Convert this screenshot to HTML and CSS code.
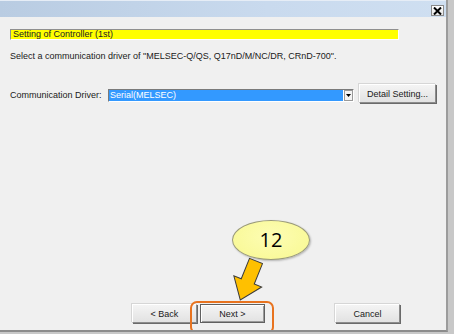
FILE: index.html
```html
<!DOCTYPE html>
<html lang="en">
<head>
    <meta charset="UTF-8">
    <title>Setting of Controller</title>
    <link rel="stylesheet" href="styles.css">
</head>
<body>

<div class="dialog">
    <!-- Title bar -->
    <div class="titlebar">
        <span class="close-btn">
            <svg width="9" height="8" viewBox="0 0 9 8"><path d="M1 0.5 L8 7.5 M8 0.5 L1 7.5" stroke="#000" stroke-width="2"/></svg>
        </span>
    </div>

    <!-- Page content -->
    <div class="content">
        <div class="heading">Setting of Controller (1st)</div>
        <p class="desc">Select a communication driver of "MELSEC-Q/QS, Q17nD/M/NC/DR, CRnD-700".</p>

        <div class="driver-row">
            <span class="label">Communication Driver:</span>
            <div class="combo">
                <span class="combo-value">Serial(MELSEC)</span>
                <span class="combo-arrow">
                    <svg width="5" height="3" viewBox="0 0 5 3"><path d="M0 0 H5 L2.5 3 Z" fill="#000"/></svg>
                </span>
            </div>
            <button class="btn detail-btn">Detail Setting...</button>
        </div>
    </div>

    <!-- Wizard buttons -->
    <div class="footer">
        <button class="btn">&lt; Back</button>
        <button class="btn default-btn">Next &gt;</button>
        <button class="btn cancel-btn">Cancel</button>
    </div>

    <!-- Callout overlay -->
    <svg class="callout-arrow" width="50" height="60" viewBox="0 0 50 60">
        <g transform="translate(28 6) rotate(22)">
            <path d="M-7 0 H7 V22 H15 L0 42 L-15 22 H-7 Z" fill="#ffc000" stroke="#3a3a3a" stroke-width="1" stroke-linejoin="miter"/>
        </g>
    </svg>
    <div class="bubble">12</div>
    <div class="highlight"></div>
</div>

</body>
</html>
```

FILE: styles.css
```css
body {
    margin: 0;
    padding: 0;
    background-color: #c8c8c8;
    font-family: "Liberation Sans", Arial, sans-serif;
    font-size: 9px;
    color: #000;
}

.dialog {
    position: relative;
    width: 448px;
    height: 332px;
    background-color: #f0f0f0;
    border-right: 2px solid #9c9c9c;
    border-bottom: 2px solid #8c8c8c;
    box-sizing: border-box;
    display: flex;
    flex-direction: column;
    overflow: hidden;
}

.titlebar {
    height: 17px;
    box-sizing: border-box;
    border-top: 1px solid #e6edf6;
    background: linear-gradient(to right, #b9cce2, #c9daee 60%, #cfdff1);
    display: flex;
    justify-content: flex-end;
    align-items: flex-start;
    padding: 4px 2px 0 0;
}

.close-btn {
    width: 13px;
    height: 11px;
    box-sizing: border-box;
    background: linear-gradient(#ffffff, #e6e6e6);
    border: 1px solid #8a8a8a;
    display: flex;
    align-items: center;
    justify-content: center;
}

.content {
    padding: 12px 0 0 10px;
}

.heading {
    width: 389px;
    height: 11px;
    box-sizing: border-box;
    background-color: #ffff00;
    border-top: 1px solid #8f8f8f;
    border-left: 1px solid #8f8f8f;
    border-right: 1px solid #ffffff;
    border-bottom: 1px solid #ffffff;
    line-height: 9px;
    padding-left: 2px;
    color: #202020;
}

.desc {
    margin: 10px 0 0 0;
    line-height: 12px;
    color: #202020;
}

.driver-row {
    display: flex;
    align-items: center;
    margin-top: 22px;
}

.label {
    width: 98px;
    white-space: nowrap;
    color: #202020;
    margin-top: 3px;
}

.combo {
    width: 246px;
    height: 13px;
    box-sizing: border-box;
    border-top: 1px solid #7a7a7a;
    border-left: 1px solid #7a7a7a;
    border-right: 1px solid #ffffff;
    border-bottom: 1px solid #ffffff;
    background-color: #ffffff;
    display: flex;
    align-items: stretch;
    margin-top: 3px;
}

.combo-value {
    flex: 1;
    background-color: #3399ff;
    color: #ffffff;
    line-height: 11px;
    padding-left: 1px;
}

.combo-arrow {
    width: 9px;
    margin-left: 1px;
    box-sizing: border-box;
    border: 1px solid #9a9a9a;
    background-color: #f4f4f4;
    display: flex;
    align-items: center;
    justify-content: center;
}

.btn {
    height: 19px;
    box-sizing: border-box;
    padding: 0;
    font-family: "Liberation Sans", Arial, sans-serif;
    font-size: 9px;
    color: #202020;
    background: linear-gradient(#f4f4f4, #e2e2e2);
    border-top: 1px solid #ffffff;
    border-left: 1px solid #ffffff;
    border-right: 1px solid #8c8c8c;
    border-bottom: 1px solid #8c8c8c;
    box-shadow: 1px 1px 0 #6a6a6a, -1px -1px 0 #d6d6d6;
}

.detail-btn {
    width: 77px;
    margin-left: 5px;
}

.footer {
    margin-top: auto;
    display: flex;
    gap: 3px;
    padding: 0 0 7px 132px;
}

.footer .btn {
    width: 65px;
}

.footer .default-btn {
    border: 1px solid #606060;
    box-shadow: inset 1px 1px 0 #ffffff, inset -1px -1px 0 #9a9a9a;
}

.footer .cancel-btn {
    margin-left: 67px;
}

/* callout */
.callout-arrow {
    position: absolute;
    left: 228px;
    top: 255px;
}

.bubble {
    position: absolute;
    left: 232px;
    top: 220px;
    width: 78px;
    height: 40px;
    box-sizing: border-box;
    border-radius: 50%;
    border: 1px solid #9a9a7a;
    background: radial-gradient(ellipse at 50% 40%, #fdfdb4, #f8f890);
    box-shadow: 1px 1px 2px rgba(0, 0, 0, 0.25);
    font-family: "Open Sans", "Liberation Sans", sans-serif;
    font-size: 20px;
    line-height: 38px;
    text-align: center;
}

.highlight {
    position: absolute;
    left: 190px;
    top: 301px;
    width: 84px;
    height: 33px;
    box-sizing: border-box;
    border: 2px solid #e8731f;
    border-radius: 7px;
}
```
